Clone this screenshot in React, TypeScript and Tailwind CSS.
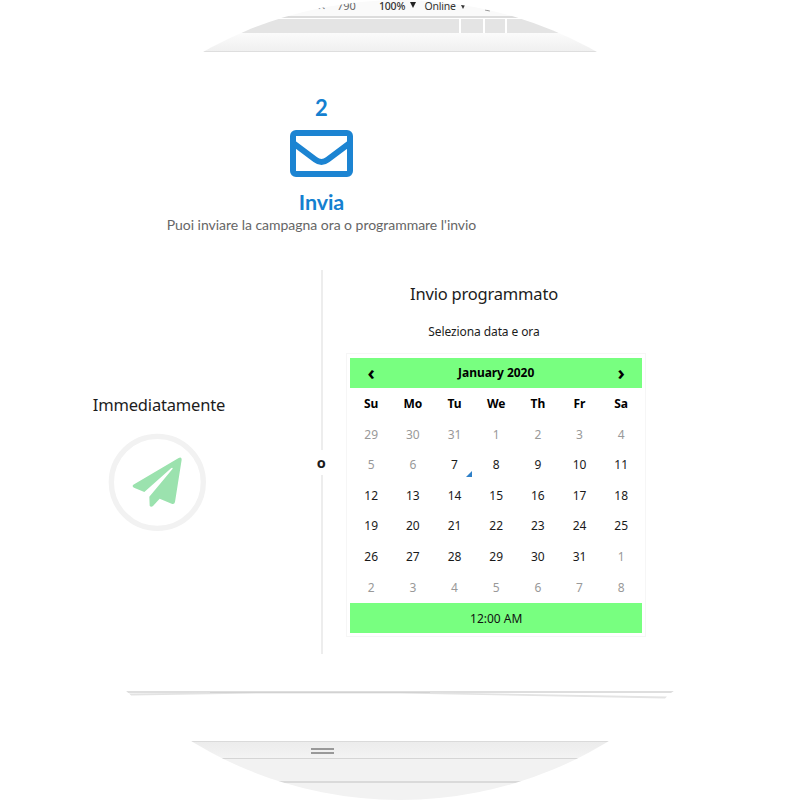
import React from 'react';

const weekdays = ['Su', 'Mo', 'Tu', 'We', 'Th', 'Fr', 'Sa'];

const days = [
  29, 30, 31, 1, 2, 3, 4,
  5, 6, 7, 8, 9, 10, 11,
  12, 13, 14, 15, 16, 17, 18,
  19, 20, 21, 22, 23, 24, 25,
  26, 27, 28, 29, 30, 31, 1,
  2, 3, 4, 5, 6, 7, 8,
];

const FIRST_ENABLED = 9;
const LAST_ENABLED = 33;

function BrowserTop() {
  return (
    <header className="shrink-0">
      <div className="flex h-4 items-start bg-[#fafafa] pl-[317px] font-['Noto_Sans',sans-serif] text-[10.5px] leading-[13px] whitespace-nowrap text-[#333]">
        <span className="w-[20px] text-[#777]">✕</span>
        <span className="w-[42px] text-[11px] leading-[12px] text-[#666]">790</span>
        <span className="w-[31px] text-[10.5px] leading-[12px] font-medium tracking-[-0.2px]">100%</span>
        <span className="mt-[2px] h-0 w-0 border-x-[3.5px] border-t-[6px] border-x-transparent border-t-[#222]" />
        <span className="ml-[8.5px] w-[36.5px] text-[10.5px] leading-[12px] tracking-[-0.2px]">Online</span>
        <span className="mt-[5px] h-0 w-0 border-x-[2px] border-t-[4px] border-x-transparent border-t-[#333]" />
        <span className="mt-[10px] ml-[20px] h-px w-[5px] rotate-12 bg-[#999]" />
      </div>
      <div className="h-[2px] bg-[#dcdcdc]" />
      <div className="h-px bg-white" />
      <div className="flex h-[14px] bg-[#e4e4e4] pl-[459px]">
        <div className="w-[26px] border-x-2 border-white" />
        <div className="w-[22px] border-r-2 border-white" />
      </div>
      <div className="h-[18px] bg-linear-to-b from-[#fbfbfb] to-[#f0f0f0]" />
      <div className="h-px bg-[#dedede]" />
    </header>
  );
}

function StepHeading() {
  return (
    <div className="flex h-[218px] w-[643px] shrink-0 flex-col items-center pt-[41px] font-['Lato',sans-serif] text-[#1480d0]">
      <div className="h-[29px] text-[22px] leading-[29px] font-bold">2</div>
      <svg className="mt-[8px] h-[47px] w-[63px]" viewBox="0 0 189 141" fill="none" stroke="#1c84d2">
        <rect x="9" y="9" width="171" height="123" rx="9" strokeWidth="18" />
        <path d="M12 41 L76 89 Q94.5 103 113 89 L177 41" strokeWidth="18" />
      </svg>
      <div className="mt-[11px] h-[26px] text-[21.5px] leading-[29px] font-bold tracking-[-0.1px]">Invia</div>
      <p className="text-[14px] leading-[22px] tracking-[-0.03px] whitespace-nowrap text-[#666]">Puoi inviare la campagna ora o programmare l'invio</p>
    </div>
  );
}

function SendNow() {
  return (
    <div className="flex w-[318px] flex-col items-center pt-[123px]">
      <div className="text-[16.5px] leading-[24px] tracking-[-0.17px]">Immediatamente</div>
      <svg className="mt-[15px] mr-[4px] h-[100px] w-[100px]" viewBox="82 157 300 300">
        <circle cx="233" cy="308" r="138" fill="none" stroke="#f2f2f2" strokeWidth="16" />
        <path
          d="M161 315 L297 235 Q306 231 306 240 L286 367 Q284 375 276 372 L240 357 L220 379 Q214 384 210 378 L209 351 L279 267 Q279 263 275 265 L194 337 L163 324 Q156 320 161 315Z"
          fill="#9be2ae"
        />
      </svg>
    </div>
  );
}

function Divider() {
  return (
    <div className="flex w-[8px] flex-col items-center">
      <div className="h-[180px] w-[2px] bg-[#ededed]" />
      <div className="mr-[1.5px] h-[25px] text-[14.5px] leading-[24px] font-bold">o</div>
      <div className="h-[179px] w-[2px] bg-[#ededed]" />
    </div>
  );
}

function Calendar() {
  return (
    <div className="mt-[11px] h-[284px] w-[300px] border border-[#f6f6f6] pt-[3.5px] pr-[3px] pl-[3.4px] text-[12px]">
      <div className="grid h-[30.5px] grid-cols-7 items-center bg-[#78ff80] text-center font-bold text-black">
        <span className="text-[20px] leading-[26px]">‹</span>
        <span className="col-span-5 text-[12px] tracking-[-0.05px]">January 2020</span>
        <span className="text-[20px] leading-[26px]">›</span>
      </div>
      <div className="grid auto-rows-[30.6px] grid-cols-7 text-center leading-[32px]">
        {weekdays.map((d) => (
          <span key={d} className="text-[12px] font-bold text-black">{d}</span>
        ))}
        {days.map((d, i) => (
          <span key={i} className={i < FIRST_ENABLED || i > LAST_ENABLED ? 'text-[#999]' : 'relative text-[#1a1a1a]'}>
            {d}
            {i === FIRST_ENABLED && (
              <i className="absolute right-[3.5px] bottom-[3px] h-0 w-0 border-b-[6px] border-l-[6px] border-b-[#2f80c8] border-l-transparent" />
            )}
          </span>
        ))}
      </div>
      <div className="mt-[0.8px] h-[30.5px] bg-[#78ff80] text-center text-[12px] leading-[31px] text-[#111]">12:00 AM</div>
    </div>
  );
}

function BrowserBottom() {
  return (
    <footer className="shrink-0">
      <svg className="block h-[51px] w-[800px]" viewBox="0 -1 800 51">
        <path d="M126 0H674L671 2H128Z" fill="#dedede" />
        <path d="M129 2.5L270 1L400 1L667 5.5L665 7.5L400 2.5L260 2.5L131 4.5Z" fill="#e3e3e3" />
        <path d="M210 1.5H430" stroke="#d2d2d2" strokeWidth="1" />
      </svg>
      <div className="h-px bg-[#dadada]" />
      <div className="flex h-[16px] bg-linear-to-b from-[#ececec] to-[#f3f3f3] pt-[6px] pl-[311px]">
        <div className="h-[6px] w-[23px] border-y-2 border-[#999]" />
      </div>
      <div className="h-px bg-[#d5d5d5]" />
      <div className="h-[22px] bg-[#f2f2f2]" />
      <div className="h-[2px] bg-[#dadada]" />
      <div className="h-[17px] bg-[#f2f2f2]" />
    </footer>
  );
}

export default function App() {
  return (
    <div className="h-[800px] w-[800px] bg-white">
      <div className="flex h-[800px] w-[800px] flex-col overflow-hidden rounded-full bg-white font-['Noto_Sans',sans-serif] text-[#1c1c1c]">
        <BrowserTop />
        <StepHeading />
        <main className="flex h-[420px] shrink-0">
          <SendNow />
          <Divider />
          <section className="ml-[20px] flex w-[300px] flex-col items-center">
            <div className="-ml-[24px] pt-[12px] text-[16.5px] leading-[24px] tracking-[-0.2px] whitespace-nowrap">Invio programmato</div>
            <div className="mt-[15px] -ml-[24px] text-[12px] leading-[21px] tracking-[-0.1px] whitespace-nowrap">Seleziona data e ora</div>
            <Calendar />
          </section>
        </main>
        <BrowserBottom />
      </div>
    </div>
  );
}
